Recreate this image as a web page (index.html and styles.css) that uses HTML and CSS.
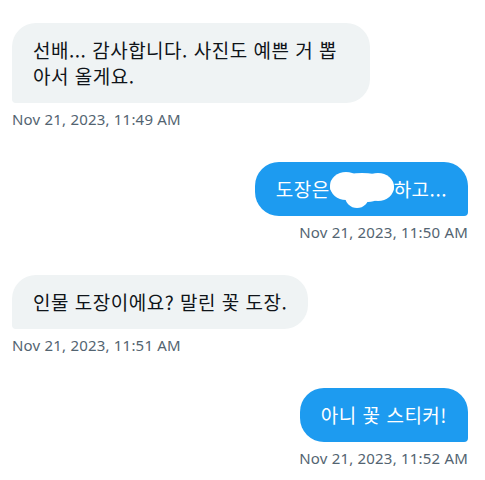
FILE: index.html
```html
<!DOCTYPE html>
<html lang="ko">
<head>
<meta charset="utf-8">
<link rel="stylesheet" href="styles.css">
</head>
<body>
<div class="chat">
  <div class="msg recv">
    <div class="bubble">선배... 감사합니다. 사진도 예쁜 거 뽑아서 올게요.</div>
    <div class="time">Nov 21, 2023, 11:49 AM</div>
  </div>
  <div class="msg sent">
    <div class="bubble">도장은<span class="blur"><svg width="64" height="36" viewBox="0 0 64 36"><g fill="#fff"><ellipse cx="32" cy="15" rx="32" ry="14"/><ellipse cx="16" cy="14" rx="16" ry="14"/><ellipse cx="48" cy="15" rx="16" ry="14"/><circle cx="27" cy="24" r="12"/><ellipse cx="38" cy="20" rx="14" ry="10"/></g></svg></span>하고...</div>
    <div class="time">Nov 21, 2023, 11:50 AM</div>
  </div>
  <div class="msg recv">
    <div class="bubble">인물 도장이에요? 말린 꽃 도장.</div>
    <div class="time">Nov 21, 2023, 11:51 AM</div>
  </div>
  <div class="msg sent">
    <div class="bubble">아니 꽃 스티커!</div>
    <div class="time">Nov 21, 2023, 11:52 AM</div>
  </div>
</div>
</body>
</html>
```
FILE: styles.css
```css
html, body {
  margin: 0;
  padding: 0;
  background: #ffffff;
}
body {
  font-family: "Noto Sans", "Noto Sans CJK KR", sans-serif;
}
.chat {
  display: flex;
  flex-direction: column;
  gap: 35px;
  padding: 23px 17px 0 12px;
}
.msg {
  display: flex;
  flex-direction: column;
}
.recv { align-items: flex-start; }
.sent { align-items: flex-end; }
.bubble {
  max-width: 316px;
  padding: 14px 21px;
  font-family: "Noto Sans CJK KR", sans-serif;
  font-size: 19px;
  line-height: 26px;
  letter-spacing: 0.5px;
  border-radius: 24px;
}
.recv .bubble {
  background: #eff3f4;
  color: #0f1419;
  border-bottom-left-radius: 4px;
}
.sent .bubble {
  background: #1d9bf0;
  color: #ffffff;
  border-bottom-right-radius: 4px;
}
.blur {
  display: inline-block;
  width: 64px;
  height: 26px;
  position: relative;
  vertical-align: top;
}
.blur svg {
  position: absolute;
  left: 0;
  top: -4px;
}
.time {
  margin-top: 8px;
  font-size: 15px;
  line-height: 16px;
  letter-spacing: 0.2px;
  color: #536471;
}
```
